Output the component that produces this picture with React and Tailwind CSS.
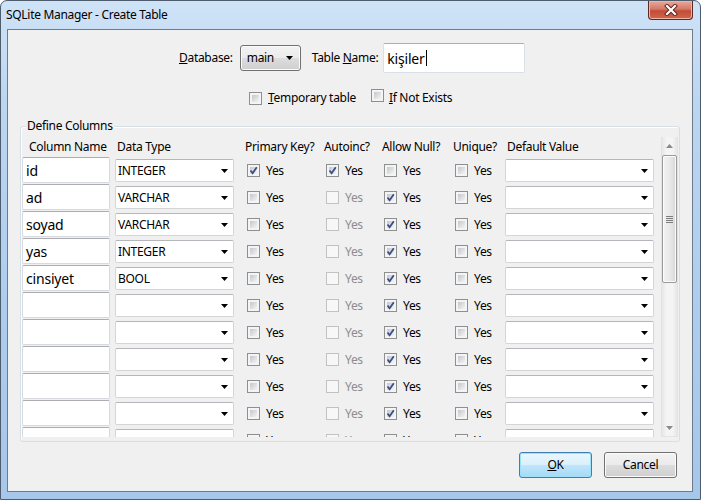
import React from "react";

const rows = [
  { name: "id", type: "INTEGER", pk: true, ai: true, aiOn: true, nul: false },
  { name: "ad", type: "VARCHAR", pk: false, ai: false, aiOn: false, nul: true },
  { name: "soyad", type: "VARCHAR", pk: false, ai: false, aiOn: false, nul: true },
  { name: "yas", type: "INTEGER", pk: false, ai: false, aiOn: false, nul: true },
  { name: "cinsiyet", type: "BOOL", pk: false, ai: false, aiOn: false, nul: true },
  { name: "", type: "", pk: false, ai: false, aiOn: false, nul: true },
  { name: "", type: "", pk: false, ai: false, aiOn: false, nul: true },
  { name: "", type: "", pk: false, ai: false, aiOn: false, nul: true },
  { name: "", type: "", pk: false, ai: false, aiOn: false, nul: true },
  { name: "", type: "", pk: false, ai: false, aiOn: false, nul: true },
  { name: "", type: "", pk: false, ai: false, aiOn: false, nul: true },
];

const Arrow = () => (
  <svg width="7" height="4" viewBox="0 0 7 4" className="shrink-0">
    <polygon points="0,0 7,0 3.5,4" fill="#000" />
  </svg>
);

const Check = ({ checked, disabled }) => (
  <span
    className={`relative inline-block h-[13px] w-[13px] shrink-0 border ${
      disabled ? "border-[#c2c2c2] bg-[#f7f7f7]" : "border-[#8e8f8f] bg-[#f4f4f4]"
    }`}
  >
    {!disabled && (
      <span className="absolute inset-[2px] bg-gradient-to-br from-[#c3c7cc] to-[#f4f4f5]" />
    )}
    {checked && (
      <svg width="11" height="11" viewBox="0 0 11 11" className="absolute left-0 top-0">
        <path d="M2.5 5.5 L4.6 8.2 L8.8 2.2" fill="none" stroke="#3b4e86" strokeWidth="1.8" />
      </svg>
    )}
  </span>
);

const CheckYes = ({ checked, disabled }) => (
  <div className="flex items-center gap-[6px] pl-[2px]">
    <Check checked={checked} disabled={disabled} />
    <span className={disabled ? "text-[#8d8d8d]" : "text-black"}>Yes</span>
  </div>
);

const Select = ({ value, width }) => (
  <div
    className={`flex h-[23px] items-center justify-between rounded-[2px] border border-[#d3d5d9] border-t-[#b4b6bb] bg-white pl-[2px] pr-[5px] text-[12px] ${width}`}
  >
    <span>{value}</span>
    <Arrow />
  </div>
);

const Button = ({ children, primary }) => (
  <div
    className={`flex h-[26px] w-[73px] items-center justify-center rounded-[3px] border text-[12px] ${
      primary
        ? "border-[#3c7fb1] bg-[linear-gradient(180deg,#eaf6fd_0%,#d9f0fc_50%,#bee6fd_50%,#a7d9f5_100%)] shadow-[inset_0_0_0_1px_#9ce1fb]"
        : "border-[#707070] bg-[linear-gradient(180deg,#f2f2f2_0%,#ebebeb_50%,#dddddd_50%,#cfcfcf_100%)] shadow-[inset_0_0_0_1px_#fcfcfc]"
    }`}
  >
    {children}
  </div>
);

export default function App() {
  return (
    <div
      className="flex h-[500px] w-[701px] flex-col overflow-hidden rounded-t-[7px] border border-[#4e5d6e] bg-[linear-gradient(180deg,#cfe3f7_0%,#bcd6f1_20%,#aecdee_60%,#a6c7ea_100%)] text-[12px] tracking-[-0.3px] text-black"
      style={{ fontFamily: '"Segoe UI", "Noto Sans", sans-serif' }}
    >
      {/* Title bar */}
      <div className="flex h-[28px] shrink-0 items-start justify-between">
        <span className="pl-[5px] pt-[5px] text-[12px] leading-[18px] text-black">
          SQLite Manager - Create Table
        </span>
        <div className="mr-[7px] flex h-[19px] w-[45px] items-center justify-center rounded-b-[4px] border border-t-0 border-[#5b2a24] bg-[linear-gradient(180deg,#e9a99b_0%,#d47866_45%,#c24d37_55%,#d3664c_100%)] shadow-[inset_0_0_0_1px_#eeb4a6]">
          <svg width="14" height="12" viewBox="0 0 14 12">
            <path d="M3 2 L11 10 M11 2 L3 10" stroke="#5a2019" strokeWidth="4" strokeLinecap="square" />
            <path d="M3 2 L11 10 M11 2 L3 10" stroke="#fff" strokeWidth="2.2" strokeLinecap="square" />
          </svg>
        </div>
      </div>

      {/* Client area */}
      <div className="mb-[7px] ml-[6px] mr-[7px] flex flex-1 flex-col border border-[#6d7b8a] bg-[#f0f0f0]">
        {/* Database / table name */}
        <div className="mt-[13px] flex h-[30px] items-center pl-[171px]">
          <span>
            <span className="underline">D</span>atabase:
          </span>
          <div className="ml-[7px] flex h-[26px] w-[61px] items-center justify-between rounded-[3px] border border-[#707070] bg-[linear-gradient(180deg,#f2f2f2_0%,#ebebeb_50%,#dddddd_50%,#cfcfcf_100%)] pl-[6px] pr-[7px] shadow-[inset_0_0_0_1px_#fcfcfc]">
            <span>main</span>
            <Arrow />
          </div>
          <span className="ml-[11px]">
            Table <span className="underline">N</span>ame:
          </span>
          <div className="ml-[5px] flex h-[30px] w-[142px] items-center rounded-[2px] border border-[#dbdfe6] border-t-[#abadb3] bg-white pl-[3px] text-[14px] tracking-[-0.2px]">
            <span>kişiler</span>
            <span className="ml-[1px] h-[16px] w-[1px] bg-black" />
          </div>
        </div>

        {/* Options */}
        <div className="mt-[17px] flex h-[16px] items-center pl-[241px]">
          <Check />
          <span className="ml-[6px]">
            <span className="underline">T</span>emporary table
          </span>
          <div className="ml-[15px]">
            <Check />
          </div>
          <span className="ml-[5px]">
            <span className="underline">I</span>f Not Exists
          </span>
        </div>

        {/* Define Columns group */}
        <div className="relative mx-[12px] mt-[20px] rounded-[3px] border border-[#d5dfe5] px-[1px] pb-[4px] pt-[10px] shadow-[inset_1px_1px_0_#fff]">
          <span className="absolute -top-[9px] left-[5px] bg-[#f0f0f0] px-[1px] leading-[16px]">
            Define Columns
          </span>
          <div className="flex h-[300px]">
            <div className="flex-1 overflow-hidden">
              {/* Header */}
              <div className="grid h-[20px] grid-cols-[93px_130px_79px_58px_71px_52px_1fr] items-center">
                <span className="pl-[7px]">Column Name</span>
                <span className="pl-[2px]">Data Type</span>
                <span>Primary Key?</span>
                <span>Autoinc?</span>
                <span>Allow Null?</span>
                <span>Unique?</span>
                <span className="pl-[2px]">Default Value</span>
              </div>
              {rows.map((r, i) => (
                <div
                  key={i}
                  className="grid h-[27px] grid-cols-[93px_130px_79px_58px_71px_52px_1fr] items-center"
                >
                  <div className="flex h-[26px] w-[88px] items-center self-start rounded-[2px] border border-[#d6dae0] border-t-[#abadb3] bg-white pl-[3px] text-[14px] tracking-[-0.2px]">
                    {r.name}
                  </div>
                  <Select value={r.type} width="w-[119px]" />
                  <CheckYes checked={r.pk} />
                  <CheckYes checked={r.ai} disabled={!r.aiOn} />
                  <CheckYes checked={r.nul} />
                  <CheckYes />
                  <Select value="" width="w-[149px]" />
                </div>
              ))}
            </div>

            {/* Scrollbar */}
            <div className="flex w-[17px] flex-col border-x border-b border-[#e3e3e3] bg-[linear-gradient(90deg,#e6e6e6_0%,#f4f4f4_30%,#f4f4f4_70%,#e6e6e6_100%)]">
              <div className="flex h-[17px] items-center justify-center">
                <svg width="7" height="4" viewBox="0 0 7 4">
                  <polygon points="0,4 7,4 3.5,0" fill="#8a8a8a" />
                </svg>
              </div>
              <div className="mt-[1px] flex h-[128px] items-center justify-center rounded-[2px] border border-[#9a9a9a] bg-[linear-gradient(90deg,#f3f3f3_0%,#e9e9e9_50%,#d7d7d7_100%)] shadow-[inset_0_0_0_1px_#fbfbfb]">
                <div className="flex flex-col gap-[1px]">
                  <span className="h-[1px] w-[7px] bg-[#7d7d7d]" />
                  <span className="h-[1px] w-[7px] bg-[#7d7d7d]" />
                  <span className="h-[1px] w-[7px] bg-[#7d7d7d]" />
                  <span className="h-[1px] w-[7px] bg-[#7d7d7d]" />
                </div>
              </div>
              <div className="flex-1" />
              <div className="flex h-[17px] items-center justify-center">
                <svg width="7" height="4" viewBox="0 0 7 4">
                  <polygon points="0,0 7,0 3.5,4" fill="#8a8a8a" />
                </svg>
              </div>
            </div>
          </div>
        </div>

        {/* Buttons */}
        <div className="mr-[15px] mt-[10px] flex justify-end gap-[12px]">
          <Button primary>
            <span>
              <span className="underline">O</span>K
            </span>
          </Button>
          <Button>Cancel</Button>
        </div>
      </div>
    </div>
  );
}
